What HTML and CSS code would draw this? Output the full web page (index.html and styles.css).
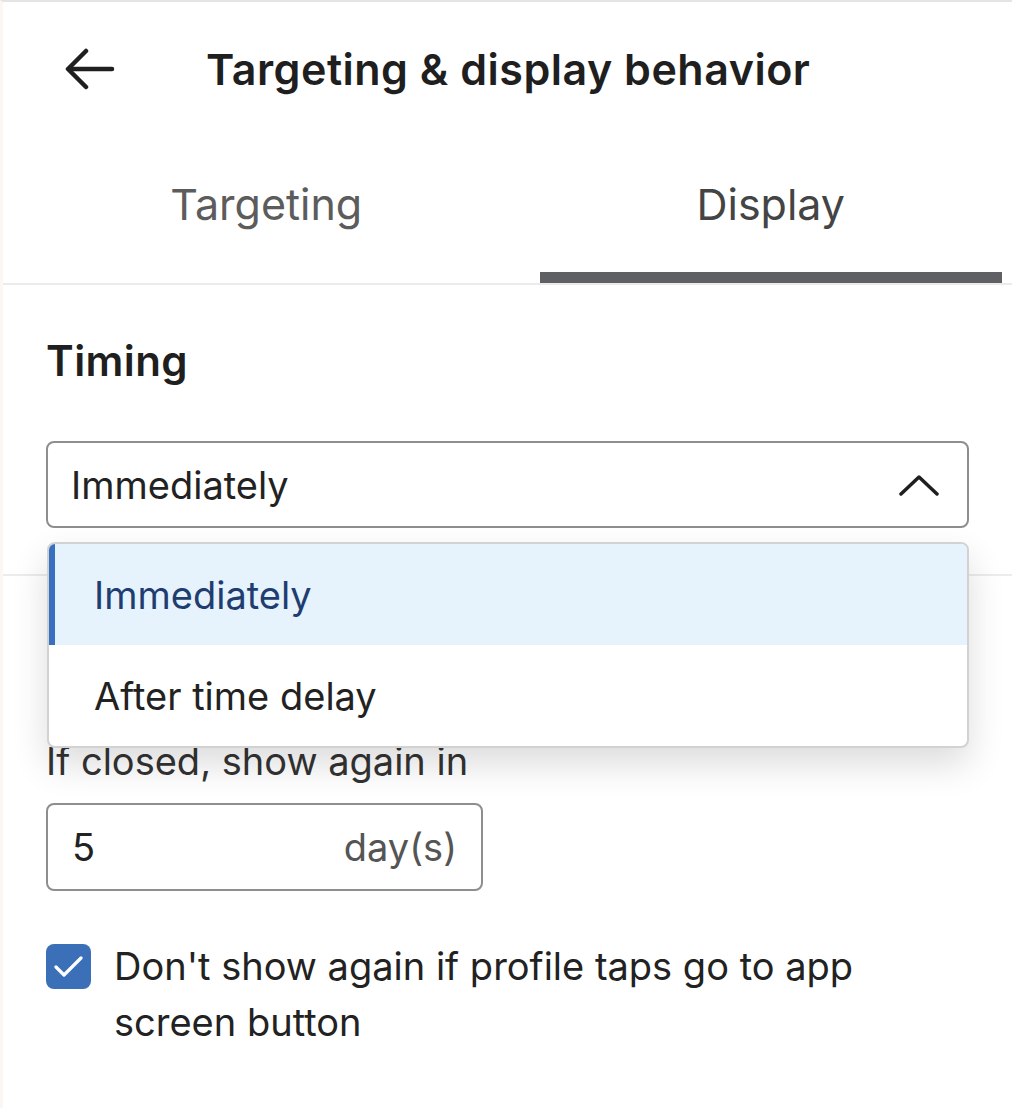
FILE: index.html
```html
<!DOCTYPE html>
<html lang="en">
<head>
  <meta charset="UTF-8">
  <meta name="viewport" content="width=device-width, initial-scale=1.0">
  <title>Targeting &amp; display behavior</title>
  <link rel="stylesheet" href="styles.css">
</head>
<body>

  <div class="screen">
    <!-- Header -->
    <div class="top-bar">
      <button class="back-btn" aria-label="Back">
        <svg width="50" height="44" viewBox="0 0 50 44" fill="none" stroke="#1f1f1f" stroke-width="4.5" stroke-linecap="round" stroke-linejoin="round">
          <path d="M47 22H4"/>
          <path d="M21 4L3 22l18 18"/>
        </svg>
      </button>
      <div class="page-title">Targeting &amp; display behavior</div>
    </div>

    <!-- Tabs -->
    <div class="tabs">
      <div class="tab first">Targeting</div>
      <div class="tab active">Display</div>
    </div>

    <!-- Timing -->
    <div class="section">
      <div class="section-title">Timing</div>

      <div class="select-wrap">
        <div class="select-box">
          <span>Immediately</span>
          <svg width="40" height="22" viewBox="0 0 40 22" fill="none" stroke="#1f1f1f" stroke-width="3.5" stroke-linecap="round" stroke-linejoin="round">
            <path d="M2 20L20 3l18 17"/>
          </svg>
        </div>

        <div class="select-menu">
          <div class="menu-item selected">Immediately</div>
          <div class="menu-item">After time delay</div>
        </div>
      </div>
    </div>

    <!-- Frequency -->
    <div class="section divided">
      <div class="section-title">Frequency</div>

      <div class="field-label">If closed, show again in</div>
      <div class="number-input">
        <span class="value">5</span>
        <span class="unit">day(s)</span>
      </div>

      <label class="check-row">
        <span class="checkbox">
          <svg width="30" height="24" viewBox="0 0 30 24" fill="none" stroke="#fff" stroke-width="3.2" stroke-linecap="round" stroke-linejoin="round">
            <path d="M2 12l8 8L27 3"/>
          </svg>
        </span>
        <span class="check-text">Don't show again if profile taps go to app screen button</span>
      </label>
    </div>
  </div>

</body>
</html>
```

FILE: styles.css
```css
/* Page */
body {
  margin: 0;
  background: #fff;
  font-family: 'Inter', 'Helvetica Neue', Arial, sans-serif;
  color: #1f1f1f;
}

.screen {
  width: 1012px;
  height: 1108px;
  border-top: 2px solid #e4e4e4;
  border-left: 3px solid #fbf7f3;
  box-sizing: border-box;
  overflow: hidden;
}

/* Header */
.top-bar {
  display: flex;
  align-items: center;
  height: 134px;
  padding-left: 62px;
}

.back-btn {
  background: none;
  border: none;
  padding: 0;
  width: 50px;
  height: 44px;
  margin-right: 91px;
  cursor: pointer;
}

.page-title {
  font-size: 43px;
  font-weight: 600;
  letter-spacing: 0.5px;
  color: #1f1f1f;
}

/* Tabs */
.tabs {
  display: grid;
  grid-template-columns: 1fr 1fr;
  column-gap: 49px;
  padding: 0 10px 0 25px;
  border-bottom: 2px solid #ebebeb;
}

.tab {
  height: 136px;
  display: flex;
  align-items: center;
  justify-content: center;
  font-size: 43px;
  color: #5c5c5c;
  border-bottom: 11px solid transparent;
  border-radius: 6px 6px 0 0;
}

.tab.first {
  padding-left: 14px;
}

.tab.active {
  color: #444;
  border-bottom-color: #5f6063;
}

/* Sections */
.section {
  padding: 0 43px;
}

.section.divided {
  border-top: 2px solid #ececec;
  margin-top: 46px;
}

.section-title {
  font-size: 42px;
  font-weight: 600;
  letter-spacing: 0.4px;
  color: #1f1f1f;
  padding-top: 50px;
  margin-bottom: 55px;
}

/* Select */
.select-wrap {
  position: relative;
}

.select-box {
  display: flex;
  align-items: center;
  justify-content: space-between;
  height: 87px;
  box-sizing: border-box;
  padding: 0 28px 0 23px;
  border: 2px solid #8e8e8e;
  border-radius: 8px;
  font-size: 38px;
  color: #222;
}

.select-menu {
  position: absolute;
  top: 101px;
  left: 1px;
  right: 0;
  background: #fff;
  border: 2px solid #d2d2d2;
  border-radius: 8px;
  box-shadow: 0 16px 36px rgba(0, 0, 0, 0.14);
  overflow: hidden;
  z-index: 2;
}

.menu-item {
  height: 101px;
  display: flex;
  align-items: center;
  padding-left: 45px;
  font-size: 38px;
  color: #222;
}

.menu-item.selected {
  background: #e6f3fc;
  color: #1f3d70;
  box-shadow: inset 6px 0 0 #3a6fbf;
}

/* Frequency fields */
.field-label {
  font-size: 38px;
  color: #333;
  padding-top: 6px;
}

.number-input {
  width: 437px;
  height: 88px;
  box-sizing: border-box;
  margin-top: 19px;
  padding: 0 24px 0 24px;
  display: flex;
  align-items: center;
  justify-content: space-between;
  border: 2px solid #8e8e8e;
  border-radius: 8px;
  font-size: 38px;
}

.number-input .value {
  color: #222;
}

.number-input .unit {
  color: #555;
}

.check-row {
  display: flex;
  align-items: flex-start;
  gap: 23px;
  margin-top: 53px;
}

.checkbox {
  flex: none;
  width: 45px;
  height: 45px;
  border-radius: 8px;
  background: #3b6fb7;
  display: flex;
  align-items: center;
  justify-content: center;
}

.check-text {
  font-size: 38px;
  line-height: 56px;
  color: #222;
  margin-top: -6px;
  max-width: 800px;
}
```
